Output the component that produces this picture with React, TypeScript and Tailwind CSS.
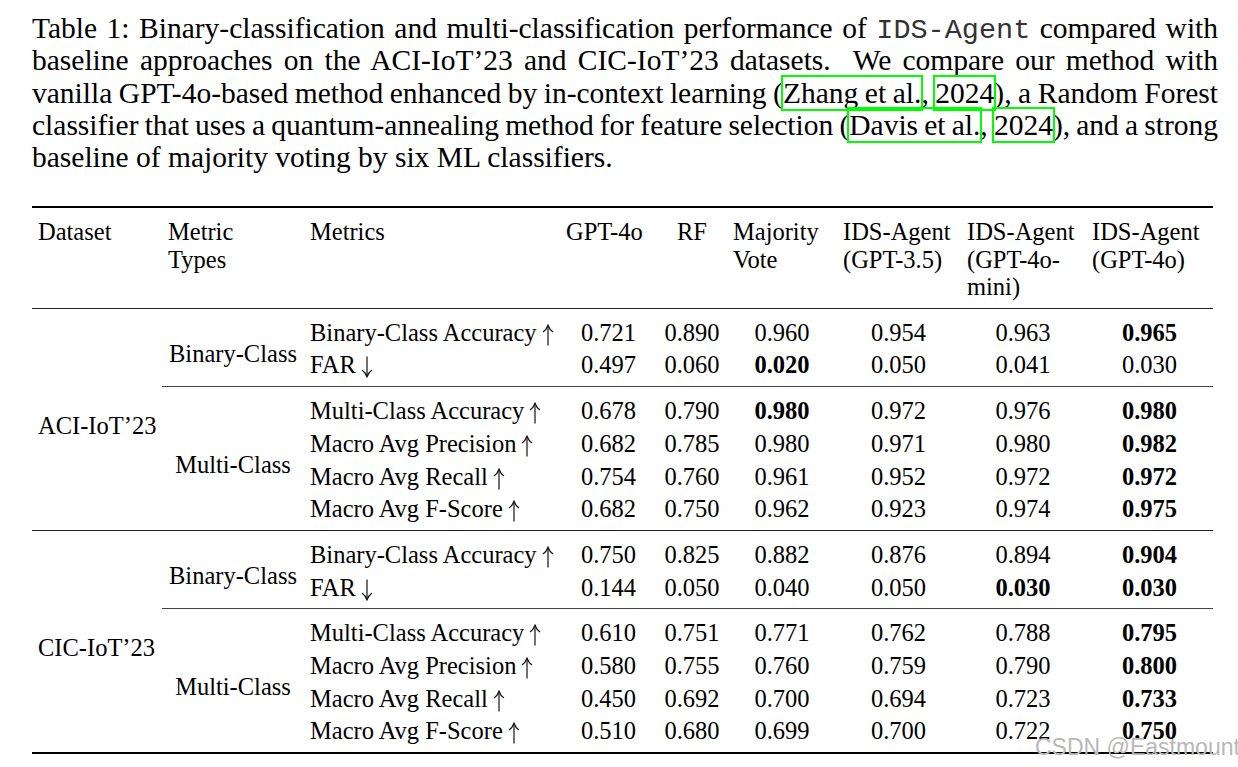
import clsx from "clsx"

type Row = { metric: string; arrow: "up" | "down"; values: string[] }
type Group = { dataset: string; binary: Row[]; multi: Row[] }

// "*" in front of a value = bold (best result)
const groups: Group[] = [
    {
        dataset: "ACI-IoT’23",
        binary: [
            { metric: "Binary-Class Accuracy", arrow: "up", values: ["0.721", "0.890", "0.960", "0.954", "0.963", "*0.965"] },
            { metric: "FAR", arrow: "down", values: ["0.497", "0.060", "*0.020", "0.050", "0.041", "0.030"] },
        ],
        multi: [
            { metric: "Multi-Class Accuracy", arrow: "up", values: ["0.678", "0.790", "*0.980", "0.972", "0.976", "*0.980"] },
            { metric: "Macro Avg Precision", arrow: "up", values: ["0.682", "0.785", "0.980", "0.971", "0.980", "*0.982"] },
            { metric: "Macro Avg Recall", arrow: "up", values: ["0.754", "0.760", "0.961", "0.952", "0.972", "*0.972"] },
            { metric: "Macro Avg F-Score", arrow: "up", values: ["0.682", "0.750", "0.962", "0.923", "0.974", "*0.975"] },
        ],
    },
    {
        dataset: "CIC-IoT’23",
        binary: [
            { metric: "Binary-Class Accuracy", arrow: "up", values: ["0.750", "0.825", "0.882", "0.876", "0.894", "*0.904"] },
            { metric: "FAR", arrow: "down", values: ["0.144", "0.050", "0.040", "0.050", "*0.030", "*0.030"] },
        ],
        multi: [
            { metric: "Multi-Class Accuracy", arrow: "up", values: ["0.610", "0.751", "0.771", "0.762", "0.788", "*0.795"] },
            { metric: "Macro Avg Precision", arrow: "up", values: ["0.580", "0.755", "0.760", "0.759", "0.790", "*0.800"] },
            { metric: "Macro Avg Recall", arrow: "up", values: ["0.450", "0.692", "0.700", "0.694", "0.723", "*0.733"] },
            { metric: "Macro Avg F-Score", arrow: "up", values: ["0.510", "0.680", "0.699", "0.700", "0.722", "*0.750"] },
        ],
    },
]

const valueCols = ["w-[97px]", "w-[70px]", "w-[110px]", "w-[123px]", "w-[126px]", "w-[127px]"]

function Cite({ children }: { children: React.ReactNode }) {
    return <span className="outline-2 outline-[#00ff00]">{children}</span>
}

// thin math-style arrow (like \uparrow / \downarrow)
function Arrow({ dir }: { dir: "up" | "down" }) {
    return (
        <svg
            width="12"
            height="22"
            viewBox="0 0 12 22"
            className={clsx("inline-block ml-[5px] align-[-5px]", dir === "down" && "rotate-180")}
            fill="none"
            stroke="#111"
            strokeWidth="1.2"
        >
            <path d="M6 1.5 V21.5" />
            <path d="M1 8 Q4.5 5.5 6 1.2 Q7.5 5.5 11 8" />
        </svg>
    )
}

function MetricRow({ row }: { row: Row }) {
    return (
        <div className="flex leading-[32.7px]">
            <div className="w-[256px] pl-[6px] whitespace-nowrap">
                {row.metric}
                <Arrow dir={row.arrow} />
            </div>
            {row.values.map((v, i) => (
                <div key={i} className={clsx(valueCols[i], "text-center", v.startsWith("*") && "font-bold")}>
                    {v.replace("*", "")}
                </div>
            ))}
        </div>
    )
}

function SubGroup({ label, rows }: { label: string; rows: Row[] }) {
    return (
        <div className="flex pt-[8px] pb-[4px]">
            <div className="w-[142px] flex items-center justify-center pt-[10px] whitespace-nowrap">{label}</div>
            <div>
                {rows.map((r) => (
                    <MetricRow key={r.metric} row={r} />
                ))}
            </div>
        </div>
    )
}

export default function App() {
    return (
        <div className="relative w-[1238px] h-[767px] overflow-hidden bg-white text-black font-['Liberation_Serif',serif]">
            <div className="pl-[32px] pt-[12px]">
                {/* Caption: each line justified like the LaTeX output */}
                <div className="w-[1186px] text-[29.5px] leading-[32.25px]">
                    <div className="h-[32.25px] text-justify [text-align-last:justify] [word-spacing:-3px] whitespace-nowrap">
                        Table 1: Binary-classification and multi-classification performance of{" "}
                        <span className="leading-none font-['Liberation_Mono',monospace] text-[28.5px] text-[#333] [word-spacing:0]">IDS-Agent</span>{" "}
                        compared with
                    </div>
                    <div className="h-[32.25px] text-justify [text-align-last:justify] [word-spacing:-3px] whitespace-nowrap">
                        baseline approaches on the ACI-IoT’23 and CIC-IoT’23 datasets.&nbsp; We compare our method with
                    </div>
                    <div className="h-[32.25px] text-justify [text-align-last:justify] [word-spacing:-3px] whitespace-nowrap">
                        vanilla GPT-4o-based method enhanced by in-context learning (<Cite>Zhang et al.</Cite>,{" "}
                        <Cite>2024</Cite>), a Random Forest
                    </div>
                    <div className="h-[32.25px] text-justify [text-align-last:justify] [word-spacing:-3px] whitespace-nowrap">
                        classifier that uses a quantum-annealing method for feature selection (<Cite>Davis et al.</Cite>,{" "}
                        <Cite>2024</Cite>), and a strong
                    </div>
                    <div className="h-[32.25px] whitespace-nowrap">baseline of majority voting by six ML classifiers.</div>
                </div>

                {/* Table */}
                <div className="mt-[33px] w-[1181px] text-[24.5px] border-t-2 border-b-2 border-black">
                    {/* header */}
                    <div className="flex pt-[10px] pb-[7px] leading-[27.5px] border-b-[1.5px] border-[#222] whitespace-nowrap">
                        <div className="w-[130px] pl-[6px]">Dataset</div>
                        <div className="w-[142px] pl-[6px]">
                            Metric
                            <br />
                            Types
                        </div>
                        <div className="w-[256px] pl-[6px]">Metrics</div>
                        <div className="w-[97px] pl-[6px]">GPT-4o</div>
                        <div className="w-[70px] text-center">RF</div>
                        <div className="w-[110px] pl-[6px]">
                            Majority
                            <br />
                            Vote
                        </div>
                        <div className="w-[123px] pl-[6px]">
                            IDS-Agent
                            <br />
                            (GPT-3.5)
                        </div>
                        <div className="w-[126px] pl-[7px]">
                            IDS-Agent
                            <br />
                            (GPT-4o-
                            <br />
                            mini)
                        </div>
                        <div className="w-[127px] pl-[6px]">
                            IDS-Agent
                            <br />
                            (GPT-4o)
                        </div>
                    </div>

                    {groups.map((g, gi) => (
                        <div key={g.dataset} className={clsx("flex", gi > 0 && "border-t-[1.5px] border-[#222]")}>
                            <div className="w-[130px] pl-[6px] pt-[14px] flex items-center whitespace-nowrap">{g.dataset}</div>
                            <div>
                                <SubGroup label="Binary-Class" rows={g.binary} />
                                <div className="border-t border-[#444]" />
                                <SubGroup label="Multi-Class" rows={g.multi} />
                            </div>
                        </div>
                    ))}
                </div>
            </div>

            {/* watermark */}
            <div className="absolute left-[1035px] top-[734px] text-[23px] leading-[26px] whitespace-nowrap text-[#b8b8b8] font-['Liberation_Sans',sans-serif]">
                CSDN @Eastmount
            </div>
        </div>
    )
}
